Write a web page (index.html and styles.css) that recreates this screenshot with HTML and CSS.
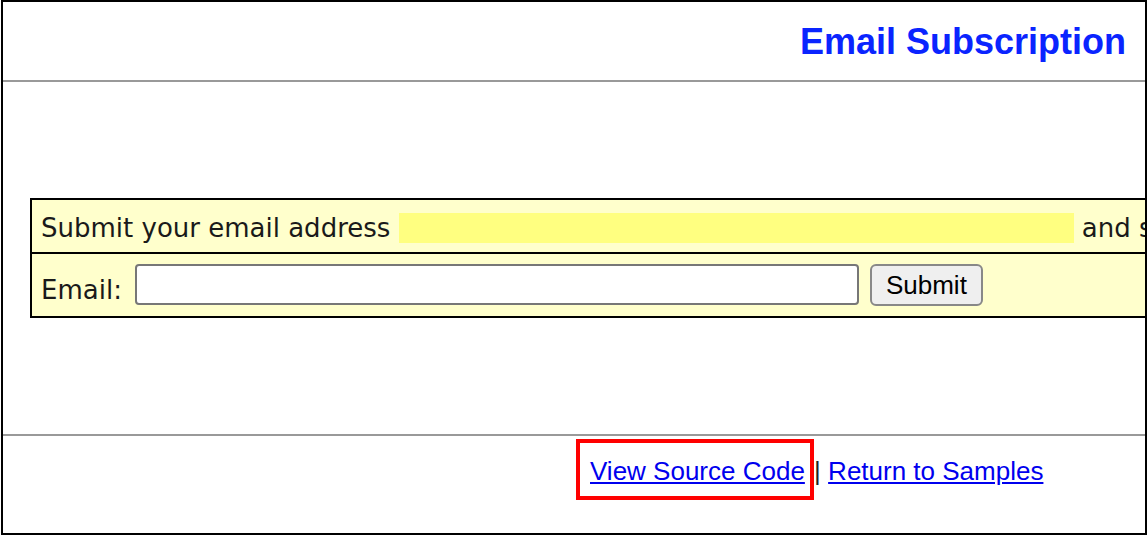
FILE: index.html
```html
<!DOCTYPE html>
<html lang="en">
<head>
<meta charset="utf-8">
<title>Email Subscription</title>
<link rel="stylesheet" href="styles.css">
</head>
<body>
<div class="frame">
  <header class="header">
    <h1 class="title">Email Subscription</h1>
  </header>
  <main class="middle">
    <div class="box">
      <div class="row row-intro">Submit your email address <span class="hl"></span> and subscribe to our monthly newsletter.</div>
      <form class="row row-form">
        <label class="label" for="email">Email:</label>
        <input class="email" id="email" type="text">
        <button class="submit" type="button">Submit</button>
      </form>
    </div>
  </main>
  <footer class="footer">
    <a class="link link-marked" href="#">View Source Code</a> <span class="sep">|</span> <a class="link" href="#">Return to Samples</a>
  </footer>
</div>
</body>
</html>
```
FILE: styles.css
```css
html, body {
  margin: 0;
  padding: 0;
  background: #fff;
}

body {
  font-family: "DejaVu Sans", Verdana, sans-serif;
}

.frame {
  box-sizing: border-box;
  width: 1146px;
  height: 535px;
  margin-left: 1px;
  border: 2px solid #000;
  display: flex;
  flex-direction: column;
  overflow: hidden;
}

.header {
  box-sizing: border-box;
  height: 80px;
  flex-shrink: 0;
  border-bottom: 2px solid #999;
  display: flex;
  justify-content: flex-end;
  align-items: flex-start;
  padding: 22px 19px 0 0;
}

.title {
  margin: 0;
  font: bold 36px/36px "Liberation Sans", Arial, sans-serif;
  color: #0a24ff;
}

.middle {
  height: 352px;
  flex-shrink: 0;
  display: flex;
  align-items: center;
  padding-left: 27px;
}

.box {
  flex-shrink: 0;
  border: 2px solid #000;
  background: #ffffcc;
  white-space: nowrap;
}

.row-intro {
  box-sizing: border-box;
  height: 54px;
  padding: 13px 0 0 9px;
  border-bottom: 2px solid #000;
  font-size: 26px;
  line-height: 30px;
  color: #1a1a1a;
}

.hl {
  display: inline-block;
  width: 675px;
  height: 30px;
  background: #ffff80;
  vertical-align: text-bottom;
}

.row-form {
  box-sizing: border-box;
  display: flex;
  align-items: flex-start;
  height: 62px;
  margin: 0;
  padding: 10px 0 0 9px;
}

.label {
  margin-top: 11px;
  font-size: 26px;
  line-height: 30px;
  color: #1a1a1a;
}

.email {
  box-sizing: border-box;
  width: 724px;
  height: 41px;
  margin: 0 0 0 13px;
  padding: 0 6px;
  border: 2px solid #777;
  border-radius: 4px;
  background: #fff;
}

.submit {
  box-sizing: border-box;
  width: 113px;
  height: 42px;
  margin: 0 0 0 11px;
  padding: 0;
  border: 2px solid #888;
  border-radius: 6px;
  background: #efefef;
  font: 26px "Liberation Sans", Arial, sans-serif;
  color: #000;
}

.footer {
  flex: 1;
  border-top: 2px solid #999;
  padding: 20px 0 0 587px;
  font: 26px/30px "Liberation Sans", Arial, sans-serif;
  color: #222;
  white-space: nowrap;
}

.sep {
  display: inline-block;
  margin-left: 2px;
  color: #222;
}

.link {
  color: #0000ee;
  text-decoration: underline;
}

.link-marked {
  position: relative;
  display: inline-block;
}

.link-marked::after {
  content: "";
  position: absolute;
  left: -14px;
  right: -9px;
  top: -17px;
  bottom: -14px;
  border: 4px solid #f00;
}
```
